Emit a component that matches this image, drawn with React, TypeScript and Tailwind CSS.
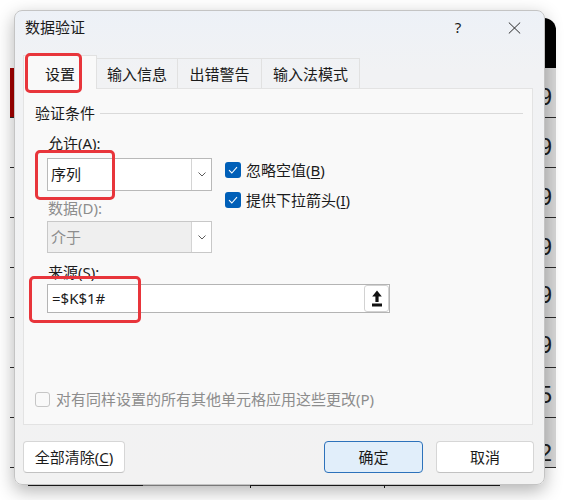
import React from 'react';

const font = "font-['Noto_Sans','Noto_Sans_CJK_SC',sans-serif]";

const rows = [
  { digit: '', pb: 'pb-[6px]' },
  { digit: '9', pb: 'pb-[6px]' },
  { digit: '9', pb: 'pb-[6px]' },
  { digit: '9', pb: 'pb-[6px]' },
  { digit: '9', pb: 'pb-[6px]' },
  { digit: '9', pb: 'pb-[8px]' },
  { digit: '9', pb: 'pb-[8px]' },
  { digit: '5', pb: 'pb-[8px]' },
  { digit: '2', pb: 'pb-[0px]' },
];

const Check: React.FC = () => (
  <span className="flex h-[16px] w-[16px] items-center justify-center rounded-[3px] bg-[#005fb8]">
    <svg width="10" height="8" viewBox="0 0 10 8" fill="none">
      <path d="M1 4.2 L3.8 7 L9 1.2" stroke="#fff" strokeWidth="1.1" />
    </svg>
  </span>
);

const Chevron: React.FC = () => (
  <svg width="8" height="5" viewBox="0 0 8 5" fill="none">
    <path d="M0.5 0.5 L4 4 L7.5 0.5" stroke="#5c5c5c" strokeWidth="1" />
  </svg>
);

const App: React.FC = () => {
  return (
    <div className={`relative h-[500px] w-[564px] overflow-hidden bg-white text-[15px] text-[#1b1b1b] ${font}`}>
      {/* spreadsheet behind the dialog */}
      <div className="absolute left-[10px] top-[18px] flex h-[470px] w-[546px] flex-col overflow-hidden rounded-tr-[12px] bg-white">
        {rows.map((r, i) => (
          <div key={i} className={`flex h-[50px] shrink-0 ${i > 0 ? 'border-b border-[#2a2a2a]' : ''}`}>
            <div className={`w-[30px] ${i === 1 ? 'bg-[#a50000]' : 'bg-white'}`} />
            <div className="flex-1 bg-white" />
            <div
              className={`flex w-[40px] items-end justify-end pr-[4px] font-['Liberation_Sans',sans-serif] text-[24px] leading-[28px] text-[#1f1f1f] ${r.pb} ${
                i === 0 ? 'bg-black' : 'bg-[#d8d8d8]'
              }`}
            >
              {r.digit}
            </div>
          </div>
        ))}
        <div className="flex h-[20px] shrink-0">
          <div className="w-[18px]" />
          <div className="mt-[16px] h-[2px] w-[115px] bg-[#1f1f1f]" />
          <div className="mt-[16px] h-[2px] w-[107px] bg-[#9a9a9a]" />
          <div className="mt-[14px] h-[6px] w-px bg-[#1f1f1f]" />
          <div className="mt-[16px] h-[2px] w-[133px] bg-[#1f1f1f]" />
          <div className="mt-[14px] h-[6px] w-px bg-[#1f1f1f]" />
          <div className="mt-[16px] h-[2px] w-[115px] bg-[#1f1f1f]" />
        </div>
      </div>

      {/* dialog */}
      <div className="absolute left-[14px] top-[10px] flex h-[475px] w-[531px] flex-col rounded-[8px] border border-[#c4c4c4] bg-[linear-gradient(180deg,#edf1f7_0px,#f1f2f4_60px,#f2f2f2_100%)] shadow-[0_6px_18px_rgba(0,0,0,0.3)]">
        {/* title bar */}
        <div className="flex h-[33px] items-center pl-[10px]">
          <span>数据验证</span>
          <span className="ml-auto w-[14px] text-center">?</span>
          <span className="ml-[42px] mr-[23px] flex w-[14px] items-center justify-center">
            <svg width="13" height="12" viewBox="0 0 13 12" fill="none">
              <path d="M0.8 0.5 L12.2 11.5 M12.2 0.5 L0.8 11.5" stroke="#2a2a2a" strokeWidth="1" />
            </svg>
          </span>
        </div>

        {/* tabs */}
        <div className="ml-[8px] mt-[11px] flex h-[33px] items-end">
          <div className="relative z-10 -mb-px flex h-[34px] w-[74px] items-center justify-center border border-b-0 border-[#e1e1e1] bg-[#f9f9f9] pt-[3px]">
            设置
          </div>
          <div className="flex h-[30px] w-[81px] items-center justify-center border-r border-t border-[#e1e1e1] pt-[2px]">
            输入信息
          </div>
          <div className="flex h-[30px] w-[84px] items-center justify-center border-r border-t border-[#e1e1e1] pt-[2px]">
            出错警告
          </div>
          <div className="flex h-[30px] w-[98px] items-center justify-center border-r border-t border-[#e1e1e1] pt-[2px]">
            输入法模式
          </div>
        </div>

        {/* panel */}
        <div className="ml-[8px] flex h-[337px] w-[510px] flex-col border border-[#e3e3e3] bg-[#f9f9f9]">
          <div className="flex items-center pl-[11px] pt-[14px]">
            <span className="leading-[20px]">验证条件</span>
            <span className="ml-[5px] mr-[9px] h-px flex-1 bg-[#dadada]" />
          </div>

          <div className="flex pl-[23px]">
            <div className="flex flex-col">
              <span className="mt-[10px] pl-[1px] leading-[20px]">允许(A):</span>
              <div className="mt-[5px] flex h-[33px] w-[165px] border border-[#b9b9b9] bg-white">
                <span className="flex flex-1 items-center pl-[3px]">序列</span>
                <span className="flex w-[20px] items-center justify-center border-l border-[#d4d4d4]">
                  <Chevron />
                </span>
              </div>
              <span className="mt-[7px] pl-[1px] leading-[20px] text-[#8d8d8d]">数据(D):</span>
              <div className="mt-[3px] flex h-[32px] w-[165px] border border-[#c8c8c8] bg-[#efefef]">
                <span className="flex flex-1 items-center pl-[3px] text-[#8d8d8d]">介于</span>
                <span className="flex w-[20px] items-center justify-center border-l border-[#d4d4d4] bg-white">
                  <Chevron />
                </span>
              </div>
            </div>
            <div className="ml-[13px] flex flex-col gap-[10px] pt-[37px]">
              <div className="flex h-[20px] items-center gap-[5px]">
                <Check />
                <span>
                  忽略空值(<span className="underline underline-offset-2">B</span>)
                </span>
              </div>
              <div className="flex h-[20px] items-center gap-[5px]">
                <Check />
                <span>
                  提供下拉箭头(<span className="underline underline-offset-2">I</span>)
                </span>
              </div>
            </div>
          </div>

          <div className="flex flex-col pl-[23px]">
            <span className="mt-[9px] pl-[1px] leading-[20px]">来源(S):</span>
            <div className="mt-[2px] flex h-[29px] w-[343px] items-center border border-[#b4b4b4] bg-white">
              <span className="pl-[4px]">=$K$1#</span>
              <span className="ml-auto flex h-[27px] w-[25px] items-center justify-center rounded-[3px] border border-[#d2d2d2] bg-white">
                <svg width="10" height="17" viewBox="0 0 10 17" fill="#111">
                  <path d="M5 0.5 L9.8 6.5 H6.6 V12 H3.4 V6.5 H0.2 Z" />
                  <rect x="0" y="13.5" width="10" height="3" />
                </svg>
              </span>
            </div>
          </div>

          <div className="mb-[15px] mt-auto flex h-[20px] items-center gap-[6px] pl-[11px] text-[#8d8d8d]">
            <span className="h-[15px] w-[15px] rounded-[3px] border border-[#c6c6c6]" />
            <span>对有同样设置的所有其他单元格应用这些更改(P)</span>
          </div>
        </div>

        {/* buttons */}
        <div className="ml-[8px] mr-[10px] mt-[16px] flex">
          <button className="flex h-[32px] w-[102px] items-center justify-center rounded-[4px] border border-[#d6d6d6] border-b-[#c2c2c2] bg-white">
            全部清除(<span className="underline underline-offset-2">C</span>)
          </button>
          <button className="ml-auto flex h-[32px] w-[99px] items-center justify-center rounded-[4px] border border-[#2d72bb] bg-[#e1eefa]">
            确定
          </button>
          <button className="ml-[13px] flex h-[32px] w-[98px] items-center justify-center rounded-[4px] border border-[#d6d6d6] border-b-[#c2c2c2] bg-white">
            取消
          </button>
        </div>
      </div>

      {/* red highlight boxes */}
      <div className="absolute left-[25px] top-[53px] z-20 h-[40px] w-[57px] rounded-[5px] border-[3px] border-[#e8353b]" />
      <div className="absolute left-[35px] top-[150px] z-20 h-[50px] w-[80px] rounded-[5px] border-[3px] border-[#e8353b]" />
      <div className="absolute left-[29px] top-[276px] z-20 h-[47px] w-[112px] rounded-[5px] border-[3px] border-[#e8353b]" />
    </div>
  );
};

export default App;
